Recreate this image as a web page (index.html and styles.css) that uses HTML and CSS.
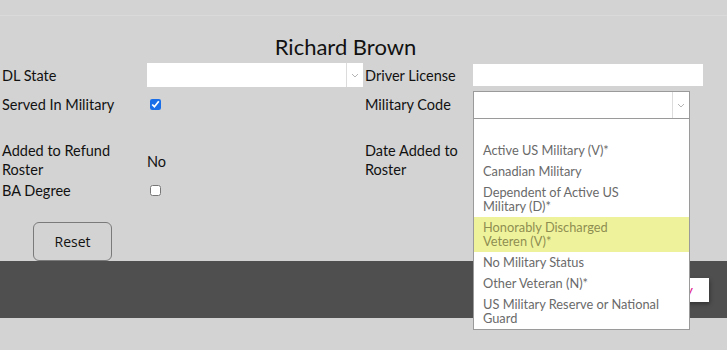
FILE: index.html
```html
<!DOCTYPE html>
<html lang="en">
<head>
    <meta charset="UTF-8">
    <meta name="viewport" content="width=device-width, initial-scale=1.0">
    <title>Richard Brown</title>
    <link rel="stylesheet" href="styles.css">
</head>
<body>
    <div class="topbar"></div>
    <h1 class="title">Richard Brown</h1>

    <form class="details">
        <div class="row row-1">
            <label class="lbl">DL State</label>
            <div class="field">
                <div class="select select-plain">
                    <span class="select-value"></span>
                    <span class="select-arrow"><svg width="8" height="5" viewBox="0 0 8 5"><path d="M1 1l3 3 3-3" fill="none" stroke="#b5b5b5" stroke-width="1"/></svg></span>
                </div>
            </div>
            <label class="lbl">Driver License</label>
            <div class="field"><input type="text" class="text-input"></div>
        </div>

        <div class="row row-2">
            <label class="lbl">Served In Military</label>
            <div class="field"><input type="checkbox" class="check" checked></div>
            <label class="lbl">Military Code</label>
            <div class="field field-code">
                <div class="select select-open">
                    <span class="select-value"></span>
                    <span class="select-arrow"><svg width="8" height="5" viewBox="0 0 8 5"><path d="M1 1l3 3 3-3" fill="none" stroke="#b5b5b5" stroke-width="1"/></svg></span>
                </div>
                <ul class="options">
                    <li class="opt opt-empty"></li>
                    <li class="opt">Active US Military (V)*</li>
                    <li class="opt">Canadian Military</li>
                    <li class="opt">Dependent of Active US Military (D)*</li>
                    <li class="opt opt-hover">Honorably Discharged<br>Veteren (V)*</li>
                    <li class="opt">No Military Status</li>
                    <li class="opt">Other Veteran (N)*</li>
                    <li class="opt">US Military Reserve or National Guard</li>
                </ul>
            </div>
        </div>

        <div class="row row-3">
            <label class="lbl">Added to Refund Roster</label>
            <div class="field value">No</div>
            <label class="lbl">Date Added to Roster</label>
            <div class="field"></div>
        </div>

        <div class="row row-4">
            <label class="lbl">BA Degree</label>
            <div class="field"><input type="checkbox" class="check"></div>
        </div>
    </form>

    <div class="actions">
        <button type="button" class="reset">Reset</button>
    </div>

    <div class="band">
        <button type="button" class="apply">Apply</button>
    </div>
    <div class="bottom"></div>
</body>
</html>
```

FILE: styles.css
```css
body {
    margin: 0;
    background-color: #d3d3d3;
    font-family: Lato, "Open Sans", sans-serif;
    color: #111;
}
.topbar {
    height: 15px;
    border-bottom: 1px solid #dadada;
}
.title {
    margin: 18px 0 0;
    padding-right: 36px;
    height: 29px;
    font-size: 22px;
    font-weight: normal;
    line-height: 26px;
    text-align: center;
    color: #111;
}
.details {
    padding-left: 2px;
}
.row {
    display: grid;
    grid-template-columns: 145px 218px 108px 230px;
    align-items: center;
}
.row-1 {
    height: 24px;
}
.row-2 {
    height: 27px;
    margin-top: 4px;
}
.row-3 {
    height: 38px;
    margin-top: 23px;
}
.row-4 {
    height: 19px;
    margin-top: 2px;
}
.lbl {
    font-size: 14.5px;
    line-height: 19px;
    color: #111;
}
.field {
    position: relative;
    height: 100%;
    display: flex;
    align-items: center;
}
.value {
    font-size: 14.5px;
    padding-top: 2px;
}
.check {
    width: 11px;
    height: 11px;
    margin: 0 0 0 3px;
    accent-color: #1a6ee8;
}
.text-input {
    width: 230px;
    height: 22px;
    box-sizing: border-box;
    border: none;
    background: white;
}
.select {
    display: flex;
    box-sizing: border-box;
    background: white;
    height: 24px;
}
.select-plain {
    width: 216px;
}
.select-value {
    flex: 1;
}
.select-arrow {
    width: 16px;
    border-left: 1px solid #dcdcdc;
    display: flex;
    align-items: center;
    justify-content: center;
}
.select-open {
    width: 217px;
    height: 27px;
    border: 1px solid #9a9a9a;
    border-bottom: none;
}
.field-code {
    align-items: flex-start;
}
.options {
    position: absolute;
    top: 27px;
    left: 0;
    width: 217px;
    box-sizing: border-box;
    margin: 0;
    padding: 0;
    list-style: none;
    background: white;
    border: 1px solid #9a9a9a;
    z-index: 5;
}
.opt {
    padding: 3px 26px 4px 9px;
    font-size: 12.8px;
    line-height: 14px;
    color: #6a6a6a;
}
.opt-empty {
    height: 14px;
}
.opt-hover {
    background: #eef39b;
    color: #8e8e52;
}
.actions {
    padding: 22px 0 0 33px;
    height: 39px;
}
.reset {
    width: 79px;
    height: 39px;
    background: transparent;
    border: 1px solid #7a7a7a;
    border-radius: 6px;
    font-family: "Open Sans", sans-serif;
    font-size: 14px;
    color: #111;
}
.band {
    height: 57px;
    background: #4f4f4f;
    display: flex;
    justify-content: flex-end;
    align-items: center;
    padding-right: 18px;
}
.apply {
    height: 24px;
    padding: 0 16px 0 20px;
    background: white;
    border: none;
    color: #e0148c;
    font-family: Lato, sans-serif;
    font-size: 14px;
    box-shadow: 1px 2px 4px rgba(0,0,0,0.35);
}
.bottom {
    height: 32px;
}
```
